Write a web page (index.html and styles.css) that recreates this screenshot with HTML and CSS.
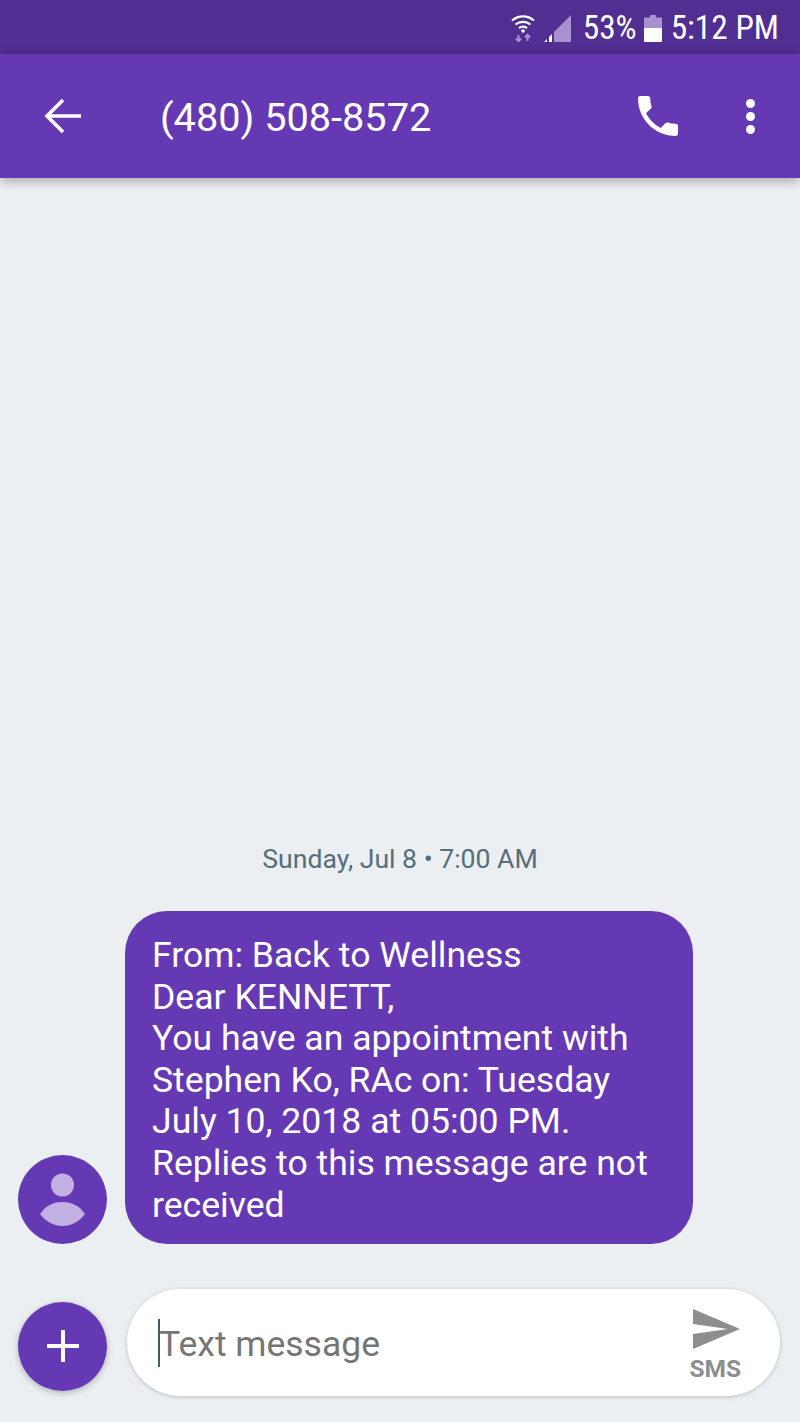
FILE: index.html
```html
<!DOCTYPE html>
<html lang="en">
<head>
    <meta charset="UTF-8">
    <meta name="viewport" content="width=device-width, initial-scale=1.0">
    <title>Messages</title>
    <link rel="stylesheet" href="styles.css">
</head>
<body>
    <div class="status-bar">
        <svg class="wifi-icon" width="24" height="28" viewBox="0 0 24 28">
            <path d="M1 6.500C7.500 1 16.500 1 23 6.500" fill="none" stroke="#fff" stroke-width="2.200"/>
            <path d="M4.500 10.500C9 7 15 7 19.500 10.500" fill="none" stroke="#fff" stroke-width="2.200"/>
            <path d="M8 14C10.500 12.300 13.500 12.300 16 14" fill="none" stroke="#fff" stroke-width="2.200"/>
            <circle cx="12" cy="17" r="1.800" fill="#fff"/>
            <path d="M7.500 21v6M5 24.500l2.500 2.700 2.500-2.700M16.500 27v-6M14 23.500l2.500-2.700 2.500 2.700" fill="none" stroke="#a792cf" stroke-width="2"/>
        </svg>
        <svg class="signal-icon" width="28" height="27" viewBox="0 0 28 27">
            <path d="M28 0V27H11V17Z" fill="#a792cf"/>
            <path d="M1 27L4 24V27ZM6 27V22L9 19V27Z" fill="#fff"/>
        </svg>
        <span class="status-text battery-pct">53%</span>
        <svg class="battery-icon" width="18" height="27" viewBox="0 0 18 27">
            <path d="M6 0H12V2.500H18V13H0V2.500H6Z" fill="#a792cf"/>
            <path d="M0 13H18V27H0Z" fill="#fff"/>
        </svg>
        <span class="status-text clock">5:12 PM</span>
    </div>

    <div class="toolbar">
        <svg class="back-icon" width="38" height="36" viewBox="0 0 38 36">
            <path d="M37 18H4M19 2L3 18L19 34" fill="none" stroke="#fff" stroke-width="3.600"/>
        </svg>
        <h1 class="contact-name">(480) 508-8572</h1>
        <svg class="call-icon" width="40" height="40" viewBox="3 3 18 18">
            <path d="M6.620 10.790c1.440 2.830 3.760 5.140 6.590 6.590l2.200-2.200c.27-.27.67-.36 1.020-.24 1.120.37 2.330.57 3.570.57.550 0 1 .45 1 1V20c0 .55-.45 1-1 1-9.390 0-17-7.610-17-17 0-.55.45-1 1-1h3.500c.55 0 1 .45 1 1 0 1.250.2 2.450.57 3.570.11.350.03.740-.25 1.020l-2.200 2.200z" fill="#fff"/>
        </svg>
        <div class="more-icon">
            <span></span><span></span><span></span>
        </div>
    </div>

    <div class="conversation">
        <div class="date-label">Sunday, Jul 8 • 7:00 AM</div>
        <div class="message-row">
            <div class="avatar">
                <svg width="89" height="89" viewBox="0 0 89 89">
                    <circle cx="44.500" cy="30" r="11.500" fill="#c2b0e2"/>
                    <path d="M22 59C28 50 36 47 44.500 47S61 50 67 59C61 67 53 71 44.500 71S28 67 22 59Z" fill="#c2b0e2"/>
                </svg>
            </div>
            <div class="bubble">From: Back to Wellness<br>Dear KENNETT,<br>You have an appointment with<br>Stephen Ko, RAc on: Tuesday<br>July 10, 2018 at 05:00 PM.<br>Replies to this message are not<br>received</div>
        </div>
    </div>

    <div class="composer">
        <button class="add-btn">
            <svg width="32" height="32" viewBox="0 0 32 32">
                <path d="M16 0V32M0 16H32" fill="none" stroke="#fff" stroke-width="4"/>
            </svg>
        </button>
        <div class="input-pill">
            <span class="caret"></span>
            <span class="placeholder">Text message</span>
            <div class="send">
                <svg class="send-icon" width="47" height="40" viewBox="0 0 47 40">
                    <path d="M0 0L47 20L0 40V25L35 20L0 15Z" fill="#8e8e8e"/>
                </svg>
                <span class="send-label">SMS</span>
            </div>
        </div>
    </div>
</body>
</html>
```

FILE: styles.css
```css
* {
    box-sizing: border-box;
}

body {
    font-family: Roboto, "Liberation Sans", sans-serif;
    display: flex;
    flex-direction: column;
    height: 1422px;
    margin: 0;
    background-color: #ebeff2;
    overflow: hidden;
}

.status-bar {
    display: flex;
    align-items: center;
    justify-content: flex-end;
    height: 54px;
    padding: 2px 21px 0 0;
    background-color: #512e91;
    color: #fff;
}
.status-text {
    font-size: 33.300px;
    font-stretch: 85%;
    line-height: 52px;
}
.wifi-icon {
    margin-right: 8px;
}
.signal-icon {
    margin-right: 12px;
}
.battery-pct {
    margin-right: 7px;
}
.battery-icon {
    margin-right: 9px;
}

.toolbar {
    position: relative;
    z-index: 1;
    display: flex;
    align-items: center;
    height: 124px;
    padding: 0 45px 0 44px;
    background-color: #6639b4;
    box-shadow: 0 3px 10px rgba(0, 0, 0, 0.3);
    color: #fff;
}
.contact-name {
    flex-grow: 1;
    margin: 3px 0 0 78px;
    font-size: 39.700px;
    font-weight: 400;
}
.call-icon {
    margin-right: 68px;
}
.more-icon {
    display: flex;
    flex-direction: column;
    gap: 4px;
}
.more-icon span {
    width: 9px;
    height: 9px;
    border-radius: 50%;
    background-color: #fff;
}

.conversation {
    flex-grow: 1;
    display: flex;
    flex-direction: column;
    justify-content: flex-end;
    padding-bottom: 45px;
}
.date-label {
    margin-bottom: 37px;
    text-align: center;
    font-size: 26.600px;
    line-height: 30px;
    color: #546e7a;
}
.message-row {
    display: flex;
    align-items: flex-end;
    padding-left: 18px;
}
.avatar {
    width: 89px;
    height: 89px;
    margin-right: 18px;
    border-radius: 50%;
    background-color: #6639b4;
}
.bubble {
    width: 568px;
    height: 333px;
    padding: 24px 27px;
    border-radius: 42px;
    background-color: #6639b4;
    color: #fff;
    font-size: 35.600px;
    line-height: 41.600px;
}

.composer {
    display: flex;
    align-items: center;
    height: 107px;
    margin-bottom: 26px;
    padding: 0 20px 0 18px;
}
.add-btn {
    display: flex;
    align-items: center;
    justify-content: center;
    width: 89px;
    height: 89px;
    margin: 7px 20px 0 0;
    padding: 0;
    border: none;
    border-radius: 50%;
    background-color: #6639b4;
    box-shadow: 0 2px 6px rgba(0, 0, 0, 0.25);
}
.input-pill {
    position: relative;
    flex-grow: 1;
    display: flex;
    align-items: center;
    height: 107px;
    padding: 0 39px 0 31px;
    border-radius: 54px;
    background-color: #fff;
    box-shadow: 0 1px 4px rgba(0, 0, 0, 0.2);
}
.caret {
    width: 2px;
    height: 48px;
    background-color: #455a64;
}
.placeholder {
    flex-grow: 1;
    margin-left: -1px;
    font-size: 35.500px;
    padding-top: 3px;
    color: #757575;
}
.send {
    display: flex;
    flex-direction: column;
    align-items: center;
    gap: 8px;
    margin-top: 5px;
}
.send-icon {
    margin-left: 3px;
}
.send-label {
    font-size: 24.500px;
    font-weight: 700;
    line-height: 24px;
    color: #8e8e8e;
}
```
